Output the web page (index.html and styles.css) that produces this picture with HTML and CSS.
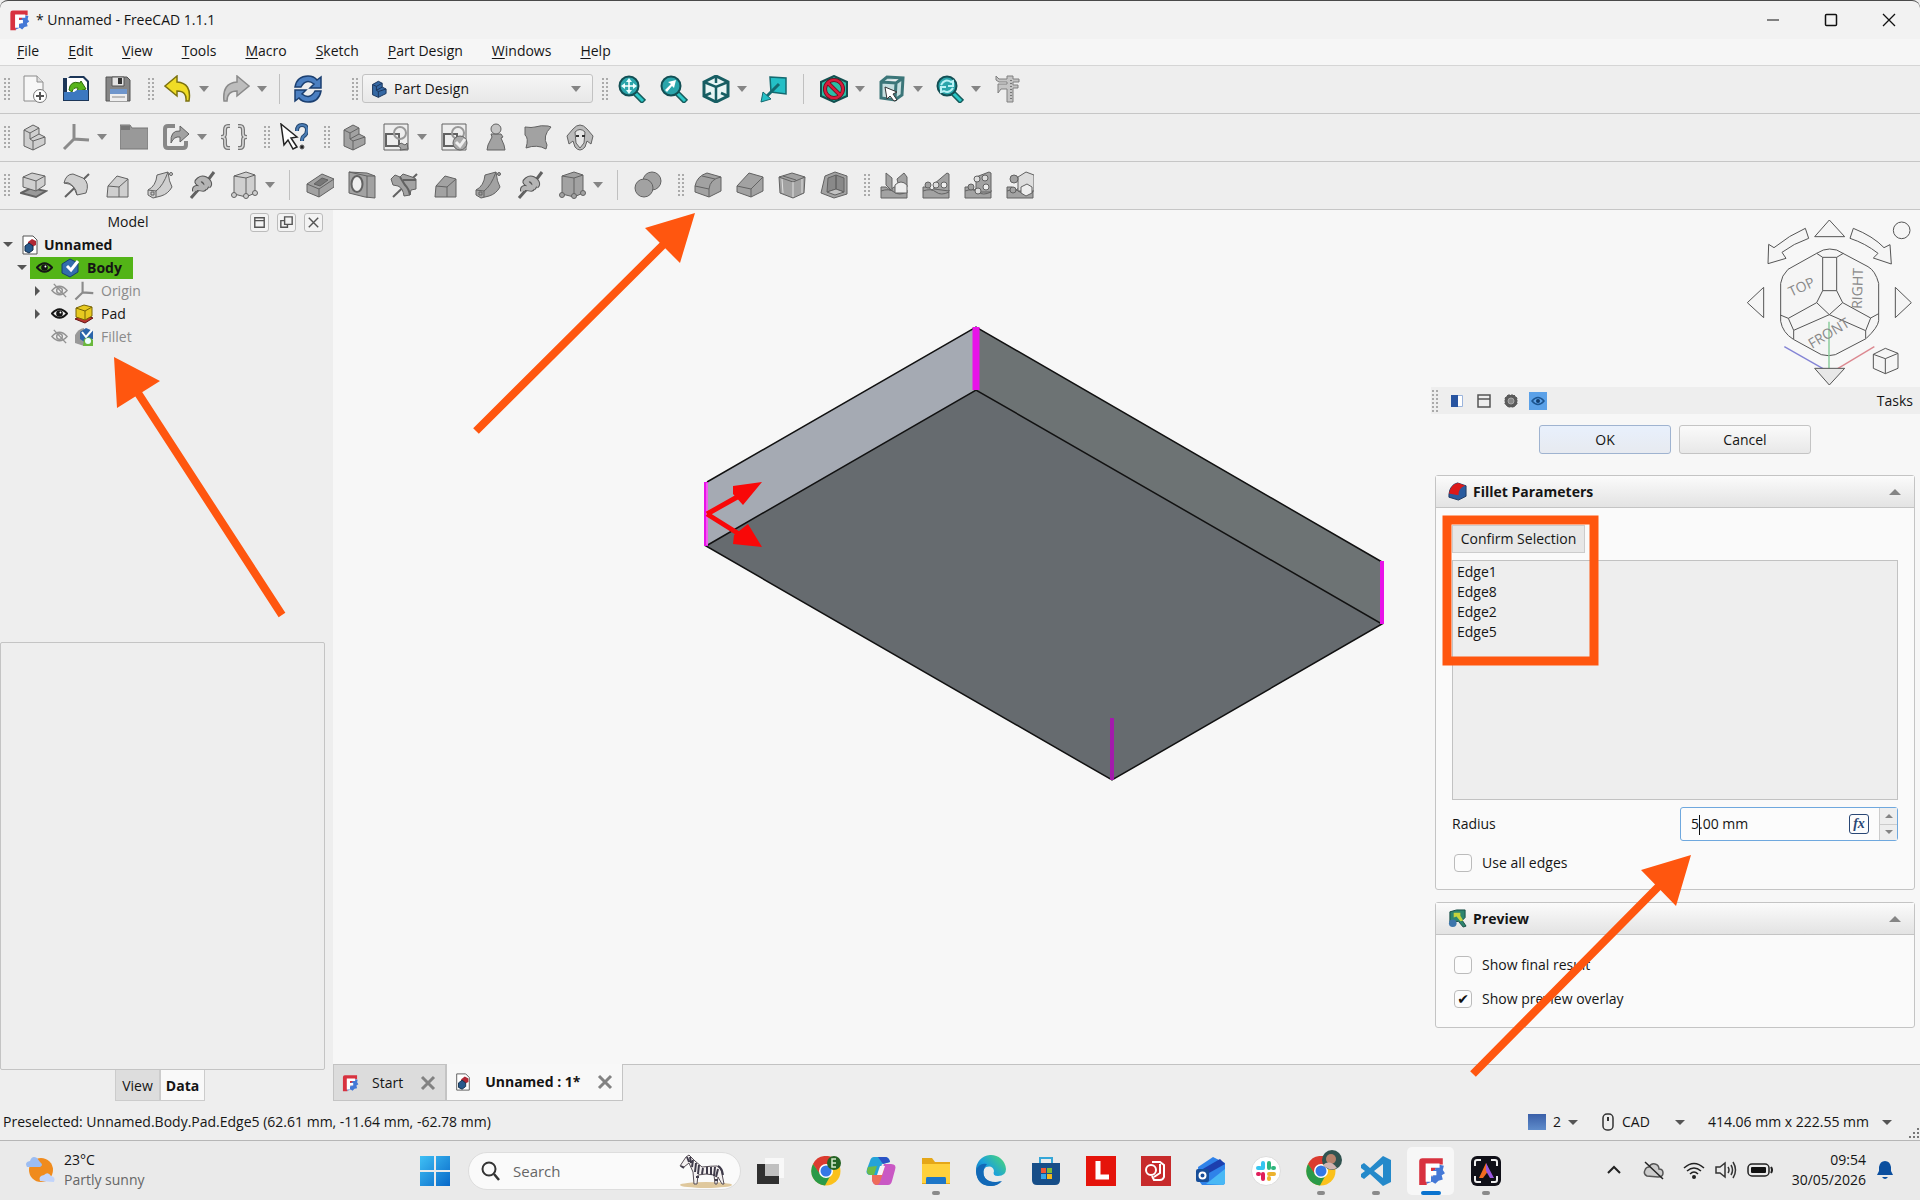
FILE: index.html
```html
<!DOCTYPE html>
<html lang="en">
<head>
<meta charset="utf-8">
<title>* Unnamed - FreeCAD 1.1.1</title>
<link rel="stylesheet" href="styles.css">
</head>
<body>
<svg class="defs" aria-hidden="true">
  <defs>
    <linearGradient id="win" x1="0" y1="0" x2="1" y2="1"><stop offset="0" stop-color="#3fc0f5"/><stop offset="1" stop-color="#0868c8"/></linearGradient>
    <linearGradient id="edg" x1="0" y1="1" x2="1" y2="0"><stop offset="0" stop-color="#0c59a4"/><stop offset=".5" stop-color="#1ba1dc"/><stop offset="1" stop-color="#4fdc6c"/></linearGradient>
    <linearGradient id="blu" x1="0" y1="0" x2="0" y2="1"><stop offset="0" stop-color="#3a5fa8"/><stop offset="1" stop-color="#5f8ccb"/></linearGradient>
  </defs>
  <symbol id="fc" viewBox="0 0 28 28"><path d="M3 27V5q0-3 3-3h19v6h-5v4h-2v6h-8v9z" fill="#d8323f"/><path d="M18 10h3V8l5 1-1 4 2 3-3 2 1 4-4 1-3 3-3-2-5 2v-7h6v-6h2z" fill="#4478d6"/><path d="M9 7h13v4h-8v3h5v4h-5v6H9z" fill="#fff"/></symbol>
  <symbol id="doc" viewBox="0 0 20 20"><path d="M3 1h10l4 4v14H3z" fill="#fff" stroke="#555"/><path d="M8 7l4-3 4 2v4l-4 2-4-2z" fill="#b02835"/><path d="M5 11l4-3 4 3v4l-4 3-4-2z" fill="#28598c" stroke="#122c48"/></symbol>
  <symbol id="eye" viewBox="0 0 18 18"><path d="M1 9q8-9 16 0-8 9-16 0z" fill="none" stroke="currentColor" stroke-width="2"/><circle cx="9" cy="9" r="3.5" fill="currentColor"/><circle cx="10" cy="8" r="1" fill="#fff"/></symbol>
  <symbol id="eyeoff" viewBox="0 0 18 18"><path d="M1 9q8-9 16 0-8 9-16 0z" fill="none" stroke="#929292" stroke-width="1.5"/><circle cx="9" cy="9" r="3" fill="none" stroke="#929292" stroke-width="1.5"/><path d="M3 2l13 14" stroke="#929292" stroke-width="1.5"/></symbol>
  <symbol id="stair" viewBox="0 0 28 28"><path d="M4 7l9-5 6 3v6l6 3v7l-12 6-9-4z"/><path d="M4 7l6 3v6l3 2v9M10 10l9-5M13 18l12-4M10 16l9-5" fill="none"/></symbol>
  <symbol id="axes" viewBox="0 0 28 28"><path d="M12 1v15l15 1M12 16L2 26" fill="none" stroke="#8b8b8b" stroke-width="3"/></symbol>
  <symbol id="lens" viewBox="0 0 28 28"><path d="M16 17l10 10" stroke="#155c5c" stroke-width="6"/><path d="M17 18l8 8" stroke="#2cc7c7" stroke-width="3"/><circle cx="11" cy="11" r="9.5" fill="#2aa5ab" stroke="#124f54" stroke-width="2"/></symbol>
  <symbol id="wire" viewBox="0 0 28 28"><path d="M2 7l12-6 12 6v14l-12 6-12-6z" fill="#e9f5f5" stroke="#175e63" stroke-width="3"/><path d="M2 7l12 5 12-5M14 12v15M14 1v7M2 21l7-3M26 21l-7-3" fill="none" stroke="#175e63" stroke-width="2.5"/></symbol>
  <symbol id="taper" viewBox="0 0 28 28"><path d="M4 15l9-10 11 3v18H3z"/><path d="M4 15l11 1v10M15 16l9-8" fill="none"/></symbol>
  <symbol id="sweep" viewBox="0 0 28 28"><path d="M2 19Q10 15 11 4l11-3q1 10 4 15-4 7-11 9l-8 2-5-3z"/><path d="M2 19l8 1q7-5 12-19M10 20v6M5 21h3v3H5z" fill="none"/><circle cx="25" cy="3" r="1.500"/></symbol>
  <symbol id="helix" viewBox="0 0 28 28"><path d="M3 27l7-8M20 9l6-8" stroke-width="3"/><path d="M7 20c-1-7 12 1 8-4s-8-4-4-7 10 4 6 8M11 12c0-10 14-1 9 3" fill="none" stroke="#555" stroke-width="6"/><path d="M7 20c-1-7 12 1 8-4s-8-4-4-7 10 4 6 8M11 12c0-10 14-1 9 3" fill="none" stroke="#b5b5b5" stroke-width="4"/></symbol>
  <symbol id="cube" viewBox="0 0 28 28"><path d="M4 5l12-4 9 3v18l-9 4-12-3z"/><path d="M4 5l12 2 9-3M16 7v19" fill="none"/><circle cx="4" cy="24" r="2.500"/><circle cx="16" cy="25" r="2.500"/><circle cx="25" cy="22" r="2.500"/></symbol>
  <symbol id="chrome" viewBox="0 0 30 30"><circle cx="15" cy="15" r="14.500" fill="#fbc11c"/><path d="M2 8A14.500 14.500 0 0 1 28 8H15v7l-6 4z" fill="#db3b30"/><path d="M2 8a14.500 14.500 0 0 0 12 21.500l6-11-10 1z" fill="#2a9a48"/><circle cx="15" cy="15" r="7" fill="#fff"/><circle cx="15" cy="15" r="5.500" fill="#3478e5"/></symbol>
  <symbol id="base" viewBox="0 0 28 28"><path d="M1 27V16h5l4 3 4-3h6l7 3v8z"/><path d="M1 20q8-3 13 1t13 0" fill="none"/></symbol>
</svg>

<header class="titlebar">
  <svg class="appicon"><use href="#fc"/></svg>
  <span class="wtitle">* Unnamed - FreeCAD 1.1.1</span>
  <div class="winctl">
    <button aria-label="Minimise"><svg width="14" height="14"><path d="M1 7h12" stroke="#111"/></svg></button>
    <button aria-label="Maximise"><svg width="14" height="14"><rect x="1.500" y="1.500" width="11" height="11" rx="1" fill="none" stroke="#111" stroke-width="1.500"/></svg></button>
    <button aria-label="Close"><svg width="14" height="14"><path d="M1 1l12 12M13 1L1 13" stroke="#111" stroke-width="1.300"/></svg></button>
  </div>
</header>
<nav class="menubar">
  <button><u>F</u>ile</button><button><u>E</u>dit</button><button><u>V</u>iew</button><button><u>T</u>ools</button><button><u>M</u>acro</button><button><u>S</u>ketch</button><button><u>P</u>art Design</button><button><u>W</u>indows</button><button><u>H</u>elp</button>
</nav>

<div class="toolrow">
  <i class="grip"></i>
  <button class="tool" aria-label="New"><svg viewBox="0 0 28 28"><path d="M4 1h13l6 6v19H4z" fill="#f7f7f7" stroke="#8c8c8c"/><path d="M17 1v6h6" fill="#ddd" stroke="#8c8c8c"/><circle cx="20" cy="21" r="6.500" fill="#fff" stroke="#777"/><path d="M20 17v8M16 21h8" stroke="#555" stroke-width="2"/></svg></button>
  <button class="tool" aria-label="Open"><svg viewBox="0 0 28 28"><path d="M1 26V3h5l2-2h14l5 5v20z" fill="#1c3658"/><path d="M5 3h16l4 4v10H5z" fill="#fff"/><path d="M7 15q1-10 11-7l1-2 5 8-9 3 1-4q-5-1-6 4z" fill="#58b51b" stroke="#2e6b0a"/><path d="M2 17h10l3-2h11v10H2z" fill="#3c78c0"/></svg></button>
  <button class="tool" aria-label="Save"><svg viewBox="0 0 28 28"><path d="M2 2h21l3 3v21H2z" fill="#858585" stroke="#555"/><path d="M8 2h12v9H8z" fill="#e4e4e4" stroke="#555"/><path d="M14 3h4v6h-4z" fill="#333"/><path d="M6 14h17v12H6z" fill="#eee"/><path d="M6 14h17v5H6z" fill="#6f96cc"/><path d="M8 22h13" stroke="#888"/></svg></button>
  <i class="grip"></i>
  <button class="tool" aria-label="Undo"><svg viewBox="0 0 28 28"><path d="M1 11L13 1v6q15 1 12 19h-3q1-10-9-10v5z" fill="#f0dc25" stroke="#7c7210" stroke-width="1.500"/></svg></button><button class="drop" aria-label="Undo list"></button>
  <button class="tool" aria-label="Redo"><svg viewBox="0 0 28 28"><path d="M27 11L15 1v6Q0 8 2 26h3Q5 16 15 16v5z" fill="#bdbdbd" stroke="#8a8a8a" stroke-width="1.500"/></svg></button><button class="drop" aria-label="Redo list"></button>
  <i class="sep tight"></i>
  <button class="tool" aria-label="Refresh"><svg viewBox="0 0 28 28"><path d="M1 12q2-11 13-11 6 0 9 4l4-3v11H16l4-4q-8-6-13 3zM27 16q-2 11-13 11-6 0-9-4l-4 3V15h11l-4 4q8 6 13-3z" fill="#4b7fc1" stroke="#1b3f70" stroke-width="1.500"/></svg></button>
  <i class="grip wide"></i>
  <div class="combo"><svg viewBox="0 0 28 28" fill="#3568a3" stroke="#1a355c" stroke-width="1.500"><use href="#stair"/></svg>
    <select aria-label="Workbench"><option>Part Design</option></select></div>
  <i class="grip"></i>
  <button class="tool" aria-label="Fit all"><svg viewBox="0 0 28 28"><use href="#lens"/><path d="M11 3l3 4H8zM11 19l3-4H8zM3 11l4-3v6zM19 11l-4-3v6z" fill="#e6ffff"/><path d="M11 6v10M6 11h10" stroke="#fff" stroke-width="1.500"/></svg></button>
  <button class="tool" aria-label="Fit selection"><svg viewBox="0 0 28 28"><use href="#lens"/><path d="M5 15l6-6-3-2 8-2-2 8-2-2-5 6z" fill="#fff"/></svg></button>
  <button class="tool" aria-label="Isometric"><svg viewBox="0 0 28 28"><use href="#wire"/></svg></button><button class="drop" aria-label="Views"></button>
  <button class="tool" aria-label="Align to selection"><svg viewBox="0 0 28 28"><path d="M10 2l16 1v16l-15-2z" fill="#24bfc6" stroke="#146a70" stroke-width="1.500"/><path d="M19 9L6 22" stroke="#146a70" stroke-width="3"/><path d="M1 27l2-10 8 7z" fill="#24bfc6" stroke="#146a70"/></svg></button>
  <i class="sep"></i>
  <button class="tool" aria-label="Draw style"><svg viewBox="0 0 28 28"><path d="M1 7l13-6 13 6v14l-13 6-13-6z" fill="#2bbfa7" stroke="#124f4f" stroke-width="2"/><circle cx="14" cy="14" r="9" fill="none" stroke="#61101c" stroke-width="4"/><path d="M8 8l12 12" stroke="#61101c" stroke-width="4"/><circle cx="14" cy="14" r="9" fill="none" stroke="#d91c3c" stroke-width="2.500"/><path d="M8 8l12 12" stroke="#d91c3c" stroke-width="2.500"/></svg></button><button class="drop" aria-label="Draw styles"></button>
  <button class="tool" aria-label="Selection"><svg viewBox="0 0 28 28"><path d="M3 7l6-5 16 1-1 17-7 5-14-2zM3 7l15 1 7-5M18 8l-1 17" fill="#c7dfe0" stroke="#3c7679" stroke-width="3"/><path d="M7 12l12 5-4 2 4 6-3 1-4-5-3 3z" fill="#fff" stroke="#333"/></svg></button><button class="drop" aria-label="Selections"></button>
  <button class="tool" aria-label="Sync view"><svg viewBox="0 0 28 28"><use href="#lens"/><path d="M5 10q4-7 10-3l2-1v5h-5M17 13q-4 6-9 3l-3 1v-5h5" fill="none" stroke="#b9f1f5" stroke-width="2"/></svg></button><button class="drop" aria-label="Sync options"></button>
  <button class="tool" aria-label="Measure"><svg viewBox="0 0 28 28"><path d="M2 1l3 3h8V1h6v3h6v3h-6v3h5v3h-5v14h-6V14H7l-3 4V9h9V7H5L2 5z" fill="#c4c4c4" stroke="#808080"/><path d="M17 5v21" stroke="#777" stroke-width="2" stroke-dasharray="1 2"/></svg></button>
</div>

<div class="toolrow grey">
  <i class="grip"></i>
  <button class="tool" aria-label="Part"><svg class="lt" viewBox="0 0 28 28"><use href="#stair"/></svg></button>
  <button class="tool" aria-label="Datum"><svg viewBox="0 0 28 28"><use href="#axes"/></svg></button><button class="drop" aria-label="Datum list"></button>
  <button class="tool" aria-label="Group"><svg viewBox="0 0 28 28"><path d="M0 2h10l2 3h16v21H0z" fill="#999" stroke="#777"/><path d="M1 3h9v4H1z" fill="#777" stroke="none"/></svg></button>
  <button class="tool" aria-label="Link"><svg viewBox="0 0 28 28"><path d="M13 3H6Q3 3 3 6v16q0 3 3 3h15q3 0 3-3v-4" fill="none" stroke="#888" stroke-width="4"/><path d="M9 20q-1-13 9-12V3l9 8-9 8v-5q-6-1-9 6z"/></svg></button><button class="drop" aria-label="Link list"></button>
  <button class="tool" aria-label="Variable set"><svg viewBox="0 0 28 28"><path d="M10 3H8Q5 3 5 7v4q0 3-4 3 4 0 4 3v4q0 4 3 4h2M18 3h2q3 0 3 4v4q0 3 4 3-4 0-4 3v4q0 4-3 4h-2" fill="none" stroke="#777" stroke-width="4"/><path d="M10 3H8Q5 3 5 7v4q0 3-4 3 4 0 4 3v4q0 4 3 4h2M18 3h2q3 0 3 4v4q0 3 4 3-4 0-4 3v4q0 4-3 4h-2" fill="none" stroke="#ddd" stroke-width="1.500"/></svg></button>
  <i class="grip"></i>
  <button class="tool" aria-label="What's this"><svg viewBox="0 0 28 28"><path d="M17 8q0-6 5-6t5 5q0 4-3 6-2 1-2 5" fill="none" stroke="#24476f" stroke-width="4"/><path d="M17 8q0-6 5-6t5 5q0 4-3 6-2 1-2 5" fill="none" stroke="#4b7db5" stroke-width="2"/><circle cx="22" cy="24" r="2" fill="#222"/><path d="M1 1l16 13-6 1 6 9-4 2-5-9-4 5z" fill="#fff" stroke="#222" stroke-width="1.500"/></svg></button>
  <i class="grip"></i>
  <button class="tool" aria-label="New body"><svg viewBox="0 0 28 28"><use href="#stair"/></svg></button>
  <button class="tool" aria-label="New sketch"><svg viewBox="0 0 28 28"><path d="M2 1h24v26H2z" fill="#eee"/><path d="M4 11h13v12H4z" fill="none" stroke-width="2"/><circle cx="18" cy="10" r="6" fill="none" stroke="#999" stroke-width="2"/><path d="M18 27l8-1-1-6-2 2-4-2-3 3 3 2z"/></svg></button><button class="drop" aria-label="Sketch list"></button>
  <button class="tool" aria-label="Validate sketch"><svg viewBox="0 0 28 28"><path d="M2 1h24v26H2z" fill="#eee"/><path d="M4 11h13v12H4z" fill="none" stroke-width="2"/><circle cx="18" cy="10" r="6" fill="none" stroke="#999" stroke-width="2"/><circle cx="20" cy="20" r="7" fill="#aaa"/><path d="M16 19l4 4 5-7" stroke="#eee" stroke-width="3" fill="none"/></svg></button>
  <button class="tool" aria-label="Check geometry"><svg viewBox="0 0 28 28"><path d="M9 11h10l2 3-2 1 3 7 1 5H5l1-5 4-8z"/><circle cx="14" cy="6" r="5" fill="#c4c4c4"/></svg></button>
  <button class="tool" aria-label="Sub-shape binder"><svg viewBox="0 0 28 28"><path d="M1 4q7 1 10 0 6-2 13-1l3 1q-9 9-4 18l-1 4q-9-5-20-1 3-10-1-13z"/></svg></button>
  <button class="tool" aria-label="Clone"><svg viewBox="0 0 28 28"><path d="M7 6q7-8 14 0l6 7-2 8-4-3-2 6q-5 6-10 0l-2-6-4 3-2-8z" fill="#bbb"/><path d="M9 9q5-5 10 0l-1 11-4 5-4-5z" fill="#e7e7e7"/><path d="M10 13h3M16 13h3" stroke="#333" stroke-width="2"/></svg></button>
</div>

<div class="toolrow grey">
  <i class="grip"></i>
  <button class="tool" aria-label="Pad"><svg class="lt" viewBox="0 0 28 28"><path d="M1 22l10-5 15 3-10 6z" fill="#999" stroke-width="2"/><path d="M3 6l9-4 13 3v9l-9 6-13-4z"/><path d="M3 6l13 4 9-5M16 10v10" fill="none"/></svg></button>
  <button class="tool" aria-label="Revolve"><svg class="lt" viewBox="0 0 28 28"><path d="M3 26L27 3" stroke-width="2"/><path d="M2 12q2-9 9-9l10 4q7 5 3 15l-9 2Q14 13 2 12z"/><path d="M2 12q8-3 13 12" fill="none"/></svg></button>
  <button class="tool" aria-label="Loft"><svg class="lt" viewBox="0 0 28 28"><use href="#taper"/></svg></button>
  <button class="tool" aria-label="Pipe"><svg class="lt" viewBox="0 0 28 28"><use href="#sweep"/></svg></button>
  <button class="tool" aria-label="Helix"><svg class="lt" viewBox="0 0 28 28"><use href="#helix"/></svg></button>
  <button class="tool" aria-label="Primitive"><svg class="lt" viewBox="0 0 28 28"><use href="#cube"/></svg></button><button class="drop" aria-label="Additive primitives"></button>
  <i class="sep"></i>
  <button class="tool" aria-label="Pocket"><svg viewBox="0 0 28 28"><path d="M1 13L16 3l12 5v8L13 26 1 21z"/><path d="M1 13l12 5 15-10M13 18v8" fill="none"/><path d="M8 13l8-6 6 2-8 6z" fill="#777"/></svg></button>
  <button class="tool" aria-label="Hole"><svg viewBox="0 0 28 28"><path d="M1 1l18 1 8 3v22l-10-1-16-4z"/><path d="M1 1l18 4v22M19 5h8" fill="none"/><ellipse cx="9" cy="13" rx="5.500" ry="8" fill="#eee" stroke-width="2"/></svg></button>
  <button class="tool" aria-label="Groove"><svg viewBox="0 0 28 28"><path d="M3 26L27 3" stroke-width="2"/><path d="M1 8l4-4 5 2 3-3 9 3 4 2v10l-5 1-1 5-6 1q-1-8-6-10l-5-1z"/><path d="M10 6l5 8q4 4 5 10M13 9h13" fill="none" stroke-width="2"/></svg></button>
  <button class="tool" aria-label="Subtractive loft"><svg viewBox="0 0 28 28"><use href="#taper"/></svg></button>
  <button class="tool" aria-label="Subtractive pipe"><svg viewBox="0 0 28 28"><use href="#sweep"/></svg></button>
  <button class="tool" aria-label="Subtractive helix"><svg viewBox="0 0 28 28"><use href="#helix"/></svg></button>
  <button class="tool" aria-label="Subtractive primitive"><svg viewBox="0 0 28 28"><use href="#cube"/></svg></button><button class="drop" aria-label="Subtractive primitives"></button>
  <i class="sep"></i>
  <button class="tool" aria-label="Boolean"><svg viewBox="0 0 28 28"><circle cx="18" cy="10" r="9"/><circle cx="10" cy="17" r="9"/></svg></button>
  <i class="grip"></i>
  <button class="tool" aria-label="Fillet"><svg viewBox="0 0 28 28"><path d="M1 15Q3 5 13 2l14 4v14l-12 6-14-5z"/><path d="M1 15l14 3v8M15 18Q16 8 27 6M8 5l13 3" fill="none"/></svg></button>
  <button class="tool" aria-label="Chamfer"><svg viewBox="0 0 28 28"><path d="M1 15L13 2l14 4v14l-12 6-14-5z"/><path d="M1 15l14 3v8M15 18L27 6" fill="none"/></svg></button>
  <button class="tool" aria-label="Draft"><svg viewBox="0 0 28 28"><path d="M1 6l13-4 13 4-1 16-11 5L2 22z"/><path d="M1 6l14 5 12-5M5 5l13 4" fill="none"/><path d="M15 11v15M4 8l1 14M24 8v14" stroke="#e0e0e0"/></svg></button>
  <button class="tool" aria-label="Thickness"><svg viewBox="0 0 28 28"><path d="M5 5l10-4 12 4v18l-13 4-13-5z"/><path d="M8 7l8-3v14l-9 3zM16 4l8 3v14l-8-3z" fill="#898989"/><path d="M7 21l9-3 8 3-9 3z" fill="#c2c2c2"/></svg></button>
  <i class="grip"></i>
  <button class="tool" aria-label="Mirror"><svg viewBox="0 0 28 28"><use href="#base"/><path d="M6 2l6 5v13l-6-6zM17 8l7-6 3 4v10h-8z"/><path d="M15 14q6-6 12 0v8H15z" fill="#eee"/></svg></button>
  <button class="tool" aria-label="Linear pattern"><svg viewBox="0 0 28 28"><use href="#base"/><path d="M12 13L25 2l2 1v17l-15-2z"/><circle cx="6" cy="14" r="3"/><circle cx="14" cy="14" r="3" fill="#ddd"/><circle cx="22" cy="14" r="3" fill="#eee"/></svg></button>
  <button class="tool" aria-label="Polar pattern"><svg viewBox="0 0 28 28"><use href="#base"/><path d="M12 6l13-5 2 1v19H12z"/><circle cx="7" cy="16" r="3"/><circle cx="13" cy="8" r="3" fill="#ddd"/><circle cx="21" cy="7" r="3" fill="#ddd"/><circle cx="14" cy="20" r="3" fill="#ddd"/><circle cx="22" cy="16" r="3" fill="#eee"/></svg></button>
  <button class="tool" aria-label="Multi-transform"><svg viewBox="0 0 28 28"><use href="#base"/><path d="M12 6l8-5 8 3v16H12z" fill="#ddd"/><circle cx="8" cy="8" r="4"/><circle cx="7" cy="19" r="3"/><path d="M15 16l6-3 5 3v6l-6 3-5-3z" fill="#eee"/></svg></button>
</div>

<main class="work">
  <aside class="dock">
    <div class="docktitle"><h2>Model</h2>
      <button aria-label="Collapse"><svg viewBox="0 0 18 18"><path d="M4 4h10v10H4zM4 7h10" /></svg></button>
      <button aria-label="Float"><svg viewBox="0 0 18 18"><path d="M7 3h8v8H7zM7 7H3v7h7v-3"/></svg></button>
      <button aria-label="Close panel"><svg viewBox="0 0 18 18"><path d="M4 4l10 10M14 4L4 14"/></svg></button>
    </div>
    <ul class="tree">
      <li class="l0"><i class="open"></i><svg><use href="#doc"/></svg><b>Unnamed</b></li>
      <li class="l1"><i class="open"></i><span class="sel"><svg><use href="#eye"/></svg><svg viewBox="0 0 20 20"><path d="M2 6l8-5 8 4v9l-8 5-8-4z" fill="#336dad" stroke="#173e70"/><path d="M7 8l4 4 7-9" fill="none" stroke="#fff" stroke-width="3"/></svg><b>Body</b></span></li>
      <li class="l2 off"><i class="shut"></i><svg><use href="#eyeoff"/></svg><svg><use href="#axes"/></svg><span>Origin</span></li>
      <li class="l2"><i class="shut"></i><svg><use href="#eye"/></svg><svg viewBox="0 0 20 20"><path d="M1 15l8-4 10 3-8 5z" fill="#bb3330" stroke="#641410"/><path d="M2 4l8-3 8 2v9l-7 4-9-3z" fill="#e7c920" stroke="#786405"/><path d="M2 4l9 3 7-4M11 7v9" fill="none" stroke="#786405"/></svg><span>Pad</span></li>
      <li class="l2 off"><i></i><svg><use href="#eyeoff"/></svg><svg viewBox="0 0 20 20"><path d="M1 16V8q3-6 9-7v18z" fill="#999"/><path d="M6 5l6-4 7 3v8l-7 4-6-4z" fill="#2c65aa"/><path d="M8 5l4 5 6-7" fill="none" stroke="#fff" stroke-width="2"/><path d="M9 19l1-7 5-2 4 3v6z" fill="#69b83c"/><circle cx="14" cy="14" r="3" fill="#eff"/></svg><span>Fillet</span></li>
    </ul>
    <div class="props"></div>
    <div class="ptabs"><button>View</button><button class="on">Data</button></div>
  </aside>

  <section class="mdi">
    <div class="view">
      <svg class="scene" role="img" aria-label="Pad solid">
        <path d="M374 271L643 116V179L373 335z" fill="#a5aab3"/>
        <path d="M643 116L1049 351V413L643 179z" fill="#6d7374"/>
        <path d="M643 179L1049 413 779 569 373 335z" fill="#666b6f"/>
        <path d="M374 271L643 116 1049 351M373 335L643 179 1049 413 779 569z" fill="none" stroke="#111" stroke-width="1.500"/>
        <path d="M643 116v63" stroke="#e812e8" stroke-width="7"/>
        <path d="M373 271v64M1049 350v63" stroke="#e812e8" stroke-width="4"/>
        <path d="M374 272v62" stroke="#f9a5f7"/>
        <path d="M779 507v62" stroke="#a31bab" stroke-width="4"/>
        <path d="M374 303l32-18M374 303l32 20" stroke="#f90808" stroke-width="5"/>
        <path d="M429 271l-29 4v8l10 11zM429 336l-29-3 1-9 14-11z" fill="#f90808"/>
      </svg>
      <svg class="navcube" viewBox="0 18 600 540" role="img" aria-label="Navigation cube">
        <path d="M193 425l120 68" stroke="#8484d5" stroke-width="4"/><path d="M463 425l-110 66" stroke="#dc8890" stroke-width="4"/>
        <g fill="#f5f5f5" stroke="#555" stroke-width="3">
          <path d="M328 45l46 50h-90zM82 293l49-46v91zM574 293l-48-46v91zM256 70l10 30q-46 16-80 42l12 18-54 16 2-58 16 10q47-38 94-58zM400 70q60 24 92 58l18-9 4 58-54-18 14-14q-38-30-84-45z"/>
          <circle cx="545" cy="76" r="25"/>
          <path d="M290 145l20-10q18-6 40 0l94 50q22 12 32 50v112q-2 20-38 54l-92 48q-20 6-42 0l-84-46q-32-20-38-54V235q2-22 22-42z"/>
          <path d="M290 145l18 12h42l20-12M308 157v100h42V157M308 257l-18 36 38 36 40-36-18-36M290 293l-85 47 16 36 107-47M181 330l24 10M368 293l84 46-15 38-109-48M476 326l-24 13M221 376v26M437 377v23" fill="none"/>
          <path d="M460 448l36-18 38 15v45l-38 16-36-16zM460 448l36 13 38-16M496 461v45"/>
        </g>
        <path d="M327 350v142" stroke="#7fc892" stroke-width="4"/>
        <path d="M284 490h90l-46 50z" fill="#e8e8e8" stroke="#555" stroke-width="3"/>
        <g class="face"><text transform="rotate(-25 214 276)" x="214" y="276">TOP</text><text transform="rotate(-88 425 312)" x="425" y="312">RIGHT</text><text transform="rotate(-31 276 432)" x="276" y="432">FRONT</text></g>
      </svg>

      <section class="tasks">
        <div class="taskhead"><i class="dots"></i>
          <button aria-label="Transparent"><svg viewBox="0 0 18 18"><path d="M3.500 3.500h11v11h-11z" fill="#fff" stroke="#9bb4dc"/><path d="M3 3h7v12H3z" fill="#2854a0"/></svg></button>
          <button aria-label="Collapse tasks"><svg viewBox="0 0 18 18"><path d="M3 3h12v12H3zM3 7h12" fill="none" stroke="#555" stroke-width="1.500"/></svg></button>
          <button aria-label="Settings"><svg viewBox="0 0 18 18"><path d="M6 3h6l3 3v6l-3 3H6l-3-3V6z" fill="#5b5b5b" stroke="#5b5b5b" stroke-dasharray="2 1"/><circle cx="9" cy="9" r="3" fill="#888" stroke="#aaa"/></svg></button>
          <button class="act" aria-label="Show"><svg viewBox="0 0 18 18"><path d="M3 9q6-7 12 0-6 7-12 0z" fill="none" stroke="#1c5591" stroke-width="1.500"/><circle cx="9" cy="9" r="2" fill="#123e70"/></svg></button>
          <h2>Tasks</h2></div>
        <div class="okrow"><button class="btn ok">OK</button><button class="btn">Cancel</button></div>
        <section class="group">
          <h3><svg viewBox="0 0 20 20"><path d="M1 13Q2 3 10 1l9 3v11l-8 4-10-3z" fill="#295b9e" stroke="#203860"/><path d="M1 12Q3 2 11 1l7 3q-7 2-7 10z" fill="#dc1919"/></svg>Fillet Parameters<button class="up" aria-label="Fold Fillet Parameters"></button></h3>
          <div class="gbody">
            <button class="confirm">Confirm Selection</button>
            <ul class="edges"><li>Edge1</li><li>Edge8</li><li>Edge2</li><li>Edge5</li></ul>
            <div class="radius"><label for="rad">Radius</label>
              <div class="spin"><input id="rad" type="text" value="5.00 mm"><i class="caret"></i>
                <button class="fx" aria-label="Expression"><em>fx</em></button>
                <div class="steps"><button class="up" aria-label="Increase"></button><button class="down" aria-label="Decrease"></button></div></div></div>
            <label class="check"><input type="checkbox">Use all edges</label>
          </div>
        </section>
        <section class="group">
          <h3><svg viewBox="0 0 20 20"><path d="M2 3l7-2h9v8l-3 3 4 6-3 1-5-6-9 1z" fill="#2e856f" stroke="#164c43"/><path d="M6 4h7v3l3 5-3 1-4-5-3 1z" fill="#c6d43c"/><circle cx="5" cy="15" r="4" fill="#3d75ac"/></svg>Preview<button class="up" aria-label="Fold Preview"></button></h3>
          <div class="gbody pv">
            <label class="check"><input type="checkbox">Show final result</label>
            <label class="check"><input type="checkbox" checked>Show preview overlay</label>
          </div>
        </section>
      </section>
    </div>
    <div class="dtabs">
      <div class="dtab"><svg><use href="#fc"/></svg><span>Start</span><button aria-label="Close Start"><svg viewBox="0 0 16 16"><path d="M2 2l12 12M14 2L2 14"/></svg></button></div>
      <div class="dtab on"><svg><use href="#doc"/></svg><span>Unnamed : 1*</span><button aria-label="Close Unnamed"><svg viewBox="0 0 16 16"><path d="M2 2l12 12M14 2L2 14"/></svg></button></div>
    </div>
  </section>
</main>

<footer class="status">
  <span class="msg">Preselected: Unnamed.Body.Pad.Edge5 (62.61 mm, -11.64 mm, -62.78 mm)</span>
  <button class="st"><svg width="18" height="16"><rect width="18" height="16" fill="url(#blu)"/></svg>2<i></i></button>
  <button class="st cad"><svg width="14" height="18"><rect x="2" y="1" width="10" height="16" rx="4" fill="none" stroke="#333" stroke-width="1.500"/><path d="M7 4v4" stroke="#333" stroke-width="2"/></svg>CAD<i></i></button>
  <button class="st dims">414.06 mm x 222.55 mm<i></i></button>
  <svg class="size" width="14" height="14"><path d="M12 2v12M8 6v8M4 10v4" stroke="#777" stroke-width="2" stroke-dasharray="2 2"/></svg>
</footer>

<nav class="taskbar">
  <div class="weather"><svg viewBox="0 0 32 32"><circle cx="17" cy="16" r="12" fill="#f08b1d"/><path d="M3 13q-3-5 3-6 2-6 7-3l3 4q4 3 0 5z" fill="#9cbdf2"/><path d="M16 27q-2-5 4-6 4-4 7 1 5 1 3 6z" fill="#c1d4fb"/></svg><p>23°C<span>Partly sunny</span></p></div>
  <button class="app" aria-label="Start"><svg viewBox="0 0 30 30"><path d="M0 0h14v14H0zM16 0h14v14H16zM0 16h14v14H0zM16 16h14v14H16z" fill="url(#win)"/></svg></button>
  <label class="search"><svg width="20" height="20"><circle cx="8" cy="8" r="6.500" fill="none" stroke="#333" stroke-width="2"/><path d="M13 13l5 6" stroke="#333" stroke-width="2.500"/></svg><input type="text" placeholder="Search" aria-label="Search">
    <svg width="54" height="34" viewBox="0 0 54 34"><ellipse cx="27" cy="31" rx="26" ry="3" fill="#dfc89d"/><path d="M1 12L7 3l3-2 6 6 7 6q9-1 15-1 4 1 5 8l2 10h-2l-4-7-1 7h-2l-1-9-8-1-8 1-1 9h-3l-1-12-4-9-5 4z" fill="#f4f1f1" stroke="#554d55"/><path d="M8 3l2 5M11 3l1 6M14 6l-1 7M17 9l-1 9M20 11l-1 9M24 14l-1 6M28 13v7M32 13v8M36 13l-1 9M39 15l-2 8M17 23h3M36 26h3M2 12l3 2M39 12q4 2 5 9" fill="none" stroke="#3f3b4a" stroke-width="2"/></svg></label>
  <button class="app first" aria-label="Task view"><svg viewBox="0 0 30 30"><path d="M9 2h19v20H9z" fill="#f8f8f8"/><path d="M1 8h22v20H1z" fill="#303030"/><path d="M9 8h14v12H9z" fill="#c0c0c0"/></svg></button>
  <button class="app" aria-label="Chrome"><svg viewBox="0 0 30 30"><use href="#chrome"/><circle cx="23" cy="7" r="7" fill="#256324"/><path d="M25 3h-4v8h4M21 7h4" fill="none" stroke="#d5e9cb" stroke-width="1.500"/></svg></button>
  <button class="app" aria-label="Copilot"><svg viewBox="0 0 30 30"><path d="M8 1h11q4 0 5 5l-8 2-4 11H5q-6 0-4-6L4 5q1-4 4-4z" fill="#24a3d8"/><path d="M19 1q4 0 5 5l-7 2-5-7z" fill="#2952c5"/><path d="M22 29H11q-4 0-5-5l8-2 4-14h7q6 0 4 6l-3 11q-1 4-4 4z" fill="#c958c4"/><path d="M6 19h6l6-5-4 12q-1 3-3 3-4 0-5-5z" fill="#ee6c5a"/><path d="M2 11l9-1-3 9H5q-6 0-3-8z" fill="#6cbb48"/><path d="M14 10h5l-3 9h-5z" fill="#f7f2f5"/></svg></button>
  <button class="app run" aria-label="Files"><svg viewBox="0 0 30 30"><path d="M1 2h10l3 4h15v22H1z" fill="#e5a718"/><path d="M1 8h28v19H1z" fill="#ffd13b"/><path d="M6 21h18q1 0 1 2v5H5v-5q0-2 1-2z" fill="#1d76c7"/></svg></button>
  <button class="app" aria-label="Edge"><svg viewBox="0 0 30 30"><path d="M0 15A15 15 0 0 1 30 13q0 7-8 7-6 0-4-5-1-6-8-4-4 3-2 9 4 9 17 5-5 5-11 5Q1 29 0 15z" fill="url(#edg)"/><path d="M0 15q3-9 11-7-6 7-2 14 6 6 17 3-4 5-11 5Q1 30 0 15z" fill="#1269b7"/></svg></button>
  <button class="app" aria-label="Store"><svg viewBox="0 0 30 30"><path d="M9 8V2h12v6" fill="none" stroke="#35a7d8" stroke-width="2"/><path d="M1 7h28v17q0 5-5 5H6q-5 0-5-5z" fill="#174e88"/><path d="M10 12h5v5h-5z" fill="#ef5835"/><path d="M16 12h5v5h-5z" fill="#80ba38"/><path d="M10 18h5v5h-5z" fill="#35a6e8"/><path d="M16 18h5v5h-5z" fill="#f3b91c"/></svg></button>
  <button class="app" aria-label="L"><svg viewBox="0 0 30 30"><path d="M0 0h30v30H0z" fill="#e5140b"/><path d="M12 5v16h11" fill="none" stroke="#fff" stroke-width="5"/></svg></button>
  <button class="app" aria-label="Reader"><svg viewBox="0 0 30 30"><path d="M0 0h30v30H0z" fill="#c72a2b"/><path d="M11 6h8l4 3v12q-1 3-4 3h-6l-2-4" fill="none" stroke="#fff" stroke-width="2"/><circle cx="10" cy="14" r="5" fill="none" stroke="#fff" stroke-width="2"/><path d="M19 8v9l-6 4" fill="none" stroke="#fff" stroke-width="2"/></svg></button>
  <button class="app" aria-label="Outlook"><svg viewBox="0 0 30 30"><path d="M2 11L17 1l12 6v19q0 3-3 3H6l-3-4z" fill="#2f82e9"/><path d="M5 14L24 3l5 5-16 9z" fill="#1d3fae"/><path d="M10 28l19-15v13q0 3-3 3z" fill="#49b8f5"/><rect y="13" width="13" height="13" rx="2" fill="#174e99"/><circle cx="6.500" cy="19.500" r="3" fill="none" stroke="#fff" stroke-width="2"/></svg></button>
  <button class="app" aria-label="Slack"><svg viewBox="0 0 30 30"><circle cx="15" cy="15" r="14.500" fill="#fff" stroke="#ddd"/><g stroke-width="4" stroke-linecap="round"><path d="M12 7v5M7 12h2" stroke="#36c5f0"/><path d="M18 7v5M22 12h1" stroke="#2eb67d"/><path d="M18 22v1M18 18h5" stroke="#ecb22e"/><path d="M12 18v5M7 18h1" stroke="#e01e5a"/></g></svg></button>
  <button class="app run" aria-label="Chrome profile"><svg viewBox="0 0 30 30"><use href="#chrome"/><circle cx="26" cy="4" r="10" fill="#315350"/><circle cx="25" cy="3" r="5" fill="#b7826b"/><path d="M17 9q7-6 14 3-7 4-14-3z" fill="#d0b5b2"/></svg></button>
  <button class="app run" aria-label="VS Code"><svg viewBox="0 0 30 30"><path d="M22 0l8 4v22l-8 4L9 18l-6 5-3-2v-3l4-3-4-3V9l3-2 6 5zM22 8l-9 7 9 7z" fill="#2489ca" fill-rule="evenodd"/></svg></button>
  <button class="app run cur" aria-label="FreeCAD"><svg><use href="#fc"/></svg></button>
  <button class="app run" aria-label="Lab"><svg viewBox="0 0 30 30"><rect width="30" height="30" rx="6" fill="#101018"/><path d="M4 10V6q0-2 2-2h4M20 4h4q2 0 2 2v4M26 20v4q0 2-2 2h-4M10 26H6q-2 0-2-2v-4" fill="none" stroke="#eee" stroke-width="2"/><path d="M8 22l7-15 3 7-6 8z" fill="#f26b21"/><path d="M15 7l8 15h-4l-4-7z" fill="#9b56e0"/></svg></button>
  <div class="tray">
    <button aria-label="Hidden icons"><svg width="14" height="10"><path d="M1 8l6-6 6 6" fill="none" stroke="#222" stroke-width="2"/></svg></button>
    <svg class="cloud" width="22" height="20"><path d="M4 16q-4-2-2-6 1-3 4-3 2-4 6-3 4 1 4 5 4 0 4 4t-5 4z" fill="#ccc" stroke="#555" stroke-width="1.500"/><path d="M2 2l18 17" stroke="#222" stroke-width="1.500"/></svg>
    <svg class="wifi" width="22" height="20"><path d="M1 8q10-9 20 0M4 11q7-6 14 0M7 14q4-4 8 0" fill="none" stroke="#222" stroke-width="1.500"/><circle cx="11" cy="17" r="2" fill="#222"/></svg>
    <svg width="22" height="20"><path d="M1 7h4l5-4v14l-5-4H1z" fill="none" stroke="#333" stroke-width="1.500"/><path d="M13 7q2 3 0 6M16 5q3 5 0 10M18 2q5 8 0 16" fill="none" stroke="#333" stroke-width="1.500"/></svg>
    <svg width="26" height="16"><rect x="1" y="2" width="21" height="12" rx="4" fill="none" stroke="#222" stroke-width="1.500"/><rect x="4" y="5" width="15" height="6" rx="1" fill="#111"/><path d="M24 5q2 3 0 6" fill="none" stroke="#222" stroke-width="2"/></svg>
    <p>09:54<span>30/05/2026</span></p>
    <svg width="18" height="20"><path d="M1 15l2-4V7q1-6 6-6t6 6v4l2 4z" fill="#0b4f9f"/><path d="M6 17h6q-3 4-6 0z" fill="#0b4f9f"/></svg>
  </div>
</nav>

<svg class="notes" aria-hidden="true">
  <path d="M476 431L668 240M282 615L136 390M1473 1074L1661 884" fill="none" stroke="#ff560f" stroke-width="8"/>
  <path d="M695 213L645 228l35 35zM114 357l3 51 43-27zM1691 855l-50 15 35 36z" fill="#ff560f"/>
  <rect x="1447" y="520" width="147" height="141" fill="none" stroke="#ff560f" stroke-width="9"/>
</svg>
</body>
</html>
```
FILE: styles.css
```css
* { box-sizing: border-box; }
body { margin: 0; min-height: 100vh; display: flex; flex-direction: column; position: relative; background: #eee; color: #151515; font: 14px/20px "Open Sans", "Noto Sans", sans-serif; }
button, input, select { font: inherit; color: inherit; }
button { background: none; border: 0; padding: 0; }
h2, h3, p, ul { margin: 0; padding: 0; font: inherit; list-style: none; }
svg { display: block; flex: none; }
.defs { position: absolute; width: 0; height: 0; }

.titlebar { height: 39px; display: flex; align-items: center; background: #f2f2f2; border-top: 1px solid #4a4a4a; border-radius: 8px 8px 0 0; padding: 0 2px 1px 8px; }
.appicon { width: 22px; height: 22px; margin-right: 6px; }
.wtitle { flex: 1; }
.winctl { display: flex; align-self: stretch; }
.winctl button { width: 58px; display: grid; place-items: center; }

.menubar { height: 27px; display: flex; gap: 29px; padding: 0 17px 2px; background: #f6f6f6; border-bottom: 1px solid #d5d5d5; }
.menubar u { text-underline-offset: 2px; }

.toolrow { height: 48px; display: flex; align-items: center; border-bottom: 1px solid #c6c6c6; padding-bottom: 2px; background: #eee; }
.tool { width: 42px; height: 32px; flex: none; display: grid; place-items: center; }
.tool svg { width: 28px; height: 28px; }
.drop { width: 16px; height: 32px; flex: none; }
.drop::before { content: ""; display: block; border: 5px solid transparent; border-top: 6px solid #858585; border-bottom: 0; width: 0; }
.grip { width: 18px; height: 24px; flex: none; background: radial-gradient(circle, #aaa 1px, transparent 1px) 0 0 / 4px 4px content-box; padding: 0 2px 0 8px; }
.grip:first-child { width: 13px; padding-left: 3px; }
.grip.wide { width: 33px; padding: 0 3px 0 22px; }
.sep { width: 18px; height: 30px; flex: none; padding-left: 8px; }
.sep::before { content: ""; display: block; width: 1px; height: 100%; background: #c0c0c0; }
.sep.tight { width: 14px; padding-left: 6px; }
.grey svg { fill: #a2a2a2; stroke: #626262; stroke-width: 1px; }
.grey svg.lt { fill: #cfcfcf; }
.combo { width: 231px; height: 29px; flex: none; position: relative; display: flex; align-items: center; padding-left: 7px; border: 1px solid #c2c2c2; border-radius: 3px; background: linear-gradient(#f5f5f5, #e8e8e8); }
.combo svg { width: 18px; height: 18px; }
.combo select { flex: 1; appearance: none; background: none; border: 0; padding: 0 6px; }
.combo::after { content: ""; border: 5px solid transparent; border-top: 6px solid #858585; border-bottom: 0; margin-right: 11px; }

.work { flex: 1; display: flex; min-height: 0; }
.dock { width: 333px; flex: none; display: flex; flex-direction: column; }
.docktitle { display: flex; align-items: center; height: 23px; gap: 8px; padding: 1px 10px 0 14px; }
.docktitle h2 { flex: 1; text-align: center; }
.docktitle button { width: 19px; height: 19px; border: 1px solid #bbb; border-radius: 3px; background: #f3f3f3; }
.docktitle svg { width: 17px; height: 17px; fill: none; stroke: #555; stroke-width: 1.5px; }
.tree li { height: 23px; display: flex; align-items: center; gap: 6px; line-height: 22px; }
.tree svg { width: 20px; height: 20px; }
.tree i { width: 16px; display: grid; place-items: center; }
.tree i::before { content: ""; border: 5px solid transparent; }
.tree .open::before { border-top: 5px solid #555; border-bottom: 0; }
.tree .shut::before { border-left: 5px solid #555; border-right: 0; }
.tree .l0 { gap: 4px; }
.tree .l1 { padding-left: 14px; gap: 0; }
.tree .l2 { padding-left: 29px; }
.tree .l2 svg, .sel svg:first-child { width: 17px; height: 17px; }
.tree .l2 svg + svg { width: 20px; height: 20px; margin-right: 1px; }
.tree .off { color: #8a8a8a; }
.sel { display: flex; align-items: center; gap: 7px; background: #53b417; padding: 0 11px 0 6px; height: 22px; }
.props { flex: 1; margin: 294px 8px 0 0; border: 1px solid #c4c4c4; border-radius: 2px; }
.ptabs { display: flex; height: 31px; margin-left: 115px; }
.ptabs button { width: 45px; border: 1px solid #ccc; border-top: 0; background: #ddd; padding-top: 2px; }
.ptabs .on { background: #f9f9f9; font-weight: 700; }

.mdi { flex: 1; display: flex; flex-direction: column; min-width: 0; }
.view { flex: 1; position: relative; background: #f7f7f7; border-bottom: 1px solid #c2c2c2; }
.scene { width: 100%; height: 100%; position: absolute; top: 1px; }
.navcube { position: absolute; top: 1px; right: 0; width: 200px; height: 180px; }
.face { fill: #888; font-size: 42px; }
.dtabs { display: flex; height: 36px; }
.dtab { display: flex; align-items: center; gap: 13px; padding: 0 9px 0 7px; background: #dcdcdc; border: 1px solid #c4c4c4; border-top: 0; }
.dtab > svg { width: 18px; height: 18px; }
.dtab.on { background: #f8f8f8; font-weight: 700; margin-top: -1px; position: relative; }
.dtab button svg { width: 16px; height: 16px; stroke: #828282; stroke-width: 3px; }
.dtab button { margin-left: 4px; }

.tasks { position: absolute; top: 177px; right: 0; width: 489px; }
.taskhead { display: flex; align-items: center; height: 27px; gap: 9px; background: #eee; padding-right: 7px; }
.taskhead button { width: 18px; height: 18px; }
.taskhead .act { background: #5ba1e8; }
.taskhead svg { width: 18px; height: 18px; }
.dots { width: 8px; height: 24px; background: radial-gradient(circle, #aaa 1px, transparent 1px) 0 0 / 4px 4px; }
.taskhead h2 { flex: 1; text-align: right; }
.okrow { display: flex; gap: 8px; margin: 11px 0 21px 108px; }
.btn { width: 132px; height: 29px; border: 1px solid #c4c4c4; border-radius: 3px; background: linear-gradient(#fafafa, #e8e8e8); }
.btn.ok { border-color: #9fb3d0; background: linear-gradient(#e8f0fc, #e7eaf0); }
.group { margin: 0 5px 12px 4px; border: 1px solid #c4c4c4; border-radius: 3px; background: #fafafa; }
.group h3 { display: flex; align-items: center; gap: 6px; height: 32px; padding: 0 13px 0 12px; border-bottom: 1px solid #c4c4c4; background: linear-gradient(#fbfbfb, #e3e3e3); font-weight: 700; }
.group h3 svg { width: 19px; height: 19px; }
.up::before, .down::before { content: ""; display: block; margin: auto; width: 0; border: 6px solid transparent; border-bottom: 6px solid #858585; border-top: 0; }
.group h3 .up { margin-left: auto; }
.gbody { padding: 17px 16px 16px; }
.confirm { height: 28px; width: 133px; border: 1px solid #ccc; background: #e7e7e7; }
.edges { height: 240px; margin-top: 7px; padding: 1px 4px; border: 1px solid #c2c2c2; background: #eee; }
.radius { display: flex; margin: 7px 0 12px; align-items: center; justify-content: space-between; }
.spin { position: relative; display: flex; align-items: center; width: 218px; height: 34px; border: 1px solid #6fa8de; border-radius: 3px; background: #fcfcfc; }
.spin input { flex: 1; min-width: 0; border: 0; background: none; padding: 0 10px; }
.caret { position: absolute; left: 18px; top: 7px; width: 1px; height: 20px; background: #111; }
.fx { width: 20px; height: 20px; border: 1px solid #294775; border-radius: 3px; line-height: 16px; font-weight: 700; color: #294775; margin-right: 10px; font-family: "Liberation Serif", serif; }
.steps { width: 18px; align-self: stretch; display: grid; border-left: 1px solid #ccc; background: #eee; }
.steps button::before { border-width: 4px; border-top-width: 0; border-bottom-width: 4px; }
.steps .down { border-top: 1px solid #ccc; }
.steps .down::before { border-top: 4px solid #858585; border-bottom: 0; }
.check { display: flex; align-items: center; gap: 10px; height: 20px; padding-left: 2px; }
.check input { appearance: none; width: 18px; height: 18px; margin: 0; border: 1px solid #bbb; border-radius: 4px; background: #fcfcfc; display: grid; place-items: center; }
.check input:checked::before { content: "✔"; font: 14px/16px "DejaVu Sans", sans-serif; color: #111; }
.gbody.pv { padding: 20px 16px 18px; display: grid; gap: 14px; }

.status { display: flex; align-items: center; height: 40px; border-bottom: 1px solid #b6b6b6; padding: 3px 0 0 3px; position: relative; }
.msg { flex: 1; }
.st { display: flex; align-items: center; gap: 7px; margin-right: 23px; }
.st i { border: 5px solid transparent; border-top: 5px solid #555; border-bottom: 0; }
.st.cad i { margin-left: 18px; }
.st.dims { gap: 13px; margin-right: 28px; }
.size { position: absolute; right: 0; bottom: 0; }

.taskbar { height: 59px; display: flex; align-items: center; background: #eaeaea; }
.weather { width: 407px; flex: none; display: flex; gap: 8px; padding: 0 0 2px 24px; align-items: center; }
.weather svg { width: 32px; height: 32px; }
.weather span, .tray span { display: block; }
.weather span { color: #666; }
.app { width: 55px; height: 48px; flex: none; display: grid; place-items: center; position: relative; }
.app svg { width: 30px; height: 30px; overflow: visible; }
.app.first { margin-left: 2px; }
.run::after { content: ""; position: absolute; bottom: 0; left: 24px; width: 8px; height: 4px; border-radius: 2px; background: #8a8a8a; }
.cur::before { content: ""; position: absolute; inset: 0 4px; border-radius: 5px; background: #f7f7f7; }
.cur svg { position: relative; }
.cur::after { width: 20px; left: 18px; background: #0a73cf; }
.search { width: 273px; height: 38px; flex: none; margin-left: 6px; display: flex; align-items: center; gap: 10px; padding: 0 7px 0 12px; border-radius: 19px; background: #fafafa; border: 1px solid #ddd; }
.search input { flex: 1; min-width: 0; border: 0; background: none; padding: 0 2px; font-size: 15px; }
.search input::placeholder { color: #666; opacity: 1; }
.tray { margin-left: auto; display: flex; align-items: center; gap: 10px; padding: 0 26px 2px 0; text-align: right; }
.cloud { margin-left: 12px; }
.wifi { margin-left: 8px; }
.tray p { margin-left: 9px; }

.notes { position: absolute; inset: 0; width: 100%; height: 100%; pointer-events: none; }
```
